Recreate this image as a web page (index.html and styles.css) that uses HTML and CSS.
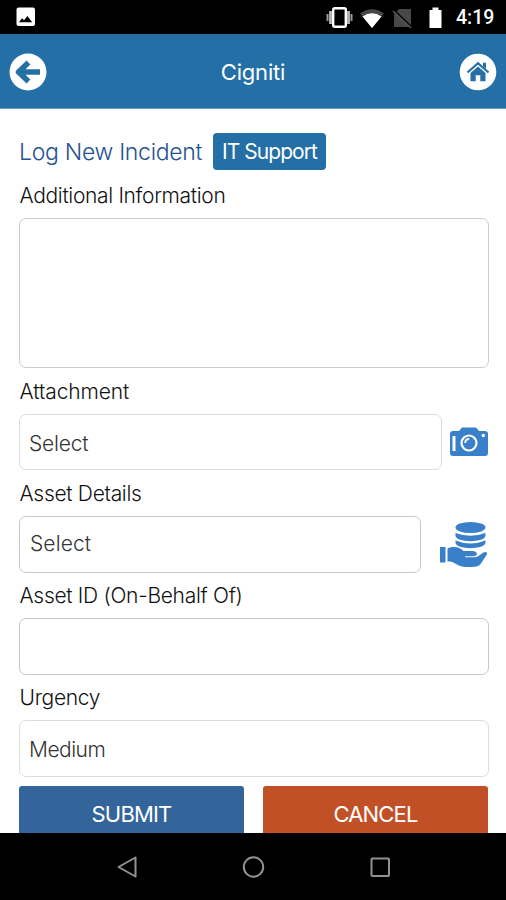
FILE: index.html
```html
<!DOCTYPE html>
<html lang="en">
<head>
<meta charset="utf-8">
<title>Cigniti - Log New Incident</title>
<link rel="stylesheet" href="styles.css">
</head>
<body>
<div class="screen">
  <div class="status">
    <svg class="status-photo" width="20" height="20" viewBox="0 0 20 20"><rect x=".5" y=".5" width="18.5" height="18.5" rx="2" fill="#fff"/><path d="M3 15.2l3-4 2 2 3.4-4.2 4.8 6.2z" fill="#000"/></svg>
    <svg class="status-icons" width="120" height="24" viewBox="0 0 120 24">
      <g fill="none" stroke="#fff"><rect x="7.200" y="3.200" width="12.600" height="18.600" rx="1.500" stroke-width="2.400"/><path d="M4.500 6v13M22.500 6v13" stroke="#bbb" stroke-width="2.800"/><path d="M1.500 9v7M25.500 9v7" stroke="#999" stroke-width="2"/></g>
      <path d="M34 8.500Q46 0 58 8.500L46 23z" fill="#484848"/><path d="M36.500 11.500Q46 5 55.500 11.500L46 23z" fill="#fff"/>
      <path d="M73 4h12v18H68V9z" fill="#484848"/><path d="M68 5.500l18 17" stroke="#000" stroke-width="2"/><path d="M67 6l18 17" stroke="#555" stroke-width="1.700"/>
      <path d="M103.500 5h3V2.500h6V5h3v18h-12z" fill="#fff"/>
    </svg>
    <span class="clock">4:19</span>
  </div>
  <header class="header">
    <svg width="38" height="38" viewBox="0 0 38 38"><circle cx="19" cy="19" r="18.500" fill="#fff"/><path d="M19.500 9.500L9.500 19l10 9.500M10 19h21" fill="none" stroke="#246fa5" stroke-width="5.500" stroke-linejoin="round"/></svg>
    <h1 class="title">Cigniti</h1>
    <svg width="38" height="38" viewBox="0 0 38 38"><circle cx="19" cy="19" r="18.300" fill="#fff"/><path d="M8.500 19.500L19 10.200l10.500 9.300" fill="none" stroke="#246fa5" stroke-width="2.200"/><path d="M24 9.800h3v6l-3-2.500zM11.500 20L19 13.500l7.500 6.500v8.300h-5.200v-6h-4.600v6h-5.200z" fill="#246fa5"/></svg>
  </header>
  <main class="form">
    <div class="heading"><h2 class="heading-text">Log New Incident</h2><span class="badge">IT Support</span></div>
    <div class="label label-info">Additional Information</div>
    <div class="field field-area"></div>
    <div class="label label-attachment">Attachment</div>
    <div class="row">
      <div class="field field-attachment">Select</div>
      <svg class="camera" width="38" height="30" viewBox="0 0 38 30"><path d="M3 4h6l3-3.500h14L29 4h6q3 0 3 3v19q0 3-3 3H3q-3 0-3-3V7q0-3 3-3z" fill="#397fca"/><path d="M4 9v15" stroke="#fff" stroke-width="3"/><circle cx="19" cy="16" r="7.500" fill="none" stroke="#fff" stroke-width="2.200"/><path d="M15.200 16q0-4 4-4" fill="none" stroke="#fff" stroke-width="1.800"/><circle cx="33.300" cy="8.500" r="1.700" fill="#fff"/></svg>
    </div>
    <div class="label label-asset">Asset Details</div>
    <div class="row">
      <div class="field field-asset field-dark">Select</div>
      <svg class="coins" width="48" height="48" viewBox="0 0 48 48" fill="#397fca"><ellipse cx="30.500" cy="6.500" rx="15" ry="5.500"/><path d="M15.500 12q15 5.500 30 0v2.500c0 7.500-30 7.500-30 0zM15.500 19.500q15 6 30 0v2c0 7.500-30 7.500-30 0zM0 26h5.500v15.500H0z"/><path d="M7.500 27.500c7-3 12-1 16 2.500h9c5 0 6 4.500 1.500 5.300h-9v.9h9.500c3.500 0 6-3 9-4.700 2-1.300 4.500 0 3.300 2L41 42.500c-2 2.500-4 3-6.500 3.300-7 .6-13 .5-17.500-2.300-3-2-5-3.500-9.500-3z"/></svg>
    </div>
    <div class="label label-id">Asset ID (On-Behalf Of)</div>
    <div class="field field-dark"></div>
    <div class="label label-urgency">Urgency</div>
    <div class="field field-urgency">Medium</div>
    <div class="actions"><div class="button submit">SUBMIT</div><div class="button cancel">CANCEL</div></div>
  </main>
  <nav class="nav">
    <svg width="24" height="26" viewBox="0 0 24 26"><path d="M21.500 3.500v19L4.500 13z" fill="none" stroke="#929292" stroke-width="2" stroke-linejoin="round"/></svg>
    <svg width="24" height="26" viewBox="0 0 24 26"><circle cx="12.500" cy="13" r="9.700" fill="none" stroke="#929292" stroke-width="2"/></svg>
    <svg width="24" height="26" viewBox="0 0 24 26"><rect x="3.500" y="4.500" width="17.500" height="17.500" rx="1" fill="none" stroke="#929292" stroke-width="2"/></svg>
  </nav>
</div>
</body>
</html>
```
FILE: styles.css
```css
* { box-sizing: border-box; }
body { margin: 0; background: #fff; font-family: Inter, "Liberation Sans", sans-serif; }
svg { display: block; flex: none; }
.screen { width: 506px; height: 900px; display: flex; flex-direction: column; overflow: hidden; }
.status { height: 34px; flex: none; background: #000; display: flex; align-items: center; padding: 0 11px 0 16px; }
.status-icons { margin-left: auto; }
.clock { width: 39px; margin-left: 10px; color: #fff; font: 500 19.5px/34px Roboto, sans-serif; white-space: nowrap; padding-top: 2px; }
.header { height: 75px; flex: none; background: #246fa5; border-bottom: 1px solid #6f9fc5; display: flex; align-items: center; justify-content: space-between; padding: 1px 9px 0 10px; }
.header svg:first-child { margin-left: -1px; }
.title { margin: 0; color: #fff; font-size: 22px; font-weight: 400; line-height: 28px; letter-spacing: -.2px; }
.form { flex: 1; min-height: 0; overflow: hidden; padding: 24px 18px 0 19px; }
.heading { display: flex; align-items: center; height: 37px; }
.heading-text { width: 194px; margin: 0; font-size: 23px; font-weight: 300; line-height: 40px; letter-spacing: -.3px; color: #255391; white-space: nowrap; }
.badge { width: 113px; height: 37px; border-radius: 4px; background: #246fa5; color: #fff; font-size: 21px; line-height: 37px; text-align: center; white-space: nowrap; letter-spacing: -.95px; }
.label { height: 45px; padding-left: .5px; line-height: 46px; font-size: 21px; font-weight: 300; letter-spacing: -.3px; color: #111; white-space: nowrap; }
.label-info { height: 48px; line-height: 51px; letter-spacing: -.33px; }
.label-attachment { height: 46px; line-height: 47px; letter-spacing: -.1px; }
.label-asset { height: 46px; line-height: 47px; }
.field { width: 470px; height: 57px; border: 1px solid #dcdcdc; border-radius: 7px; background: #fff; padding-left: 9px; line-height: 57px; font-size: 21px; font-weight: 300; letter-spacing: -.2px; color: #333; white-space: nowrap; }
.field-area { height: 150px; border-color: #ccc; }
.field-dark { border-color: #c8c8c8; }
.field-attachment { width: 423px; height: 56px; }
.field-asset { width: 403px; padding-left: 10px; line-height: 54px; letter-spacing: .1px; }
.field-urgency { letter-spacing: -.5px; }
.row { display: flex; align-items: center; }
.camera { margin-left: 8px; }
.coins { margin-left: 19px; }
.actions { display: flex; justify-content: space-between; margin-top: 9px; width: 469px; }
.button { width: 225px; height: 57px; border-radius: 3px 3px 0 0; color: #fff; font-size: 22px; line-height: 57px; text-align: center; letter-spacing: -.85px; }
.submit { background: #33659b; }
.cancel { background: #c25026; }
.nav { height: 67px; flex: none; background: #000; display: flex; justify-content: space-between; align-items: center; padding: 0 114px; }
```
